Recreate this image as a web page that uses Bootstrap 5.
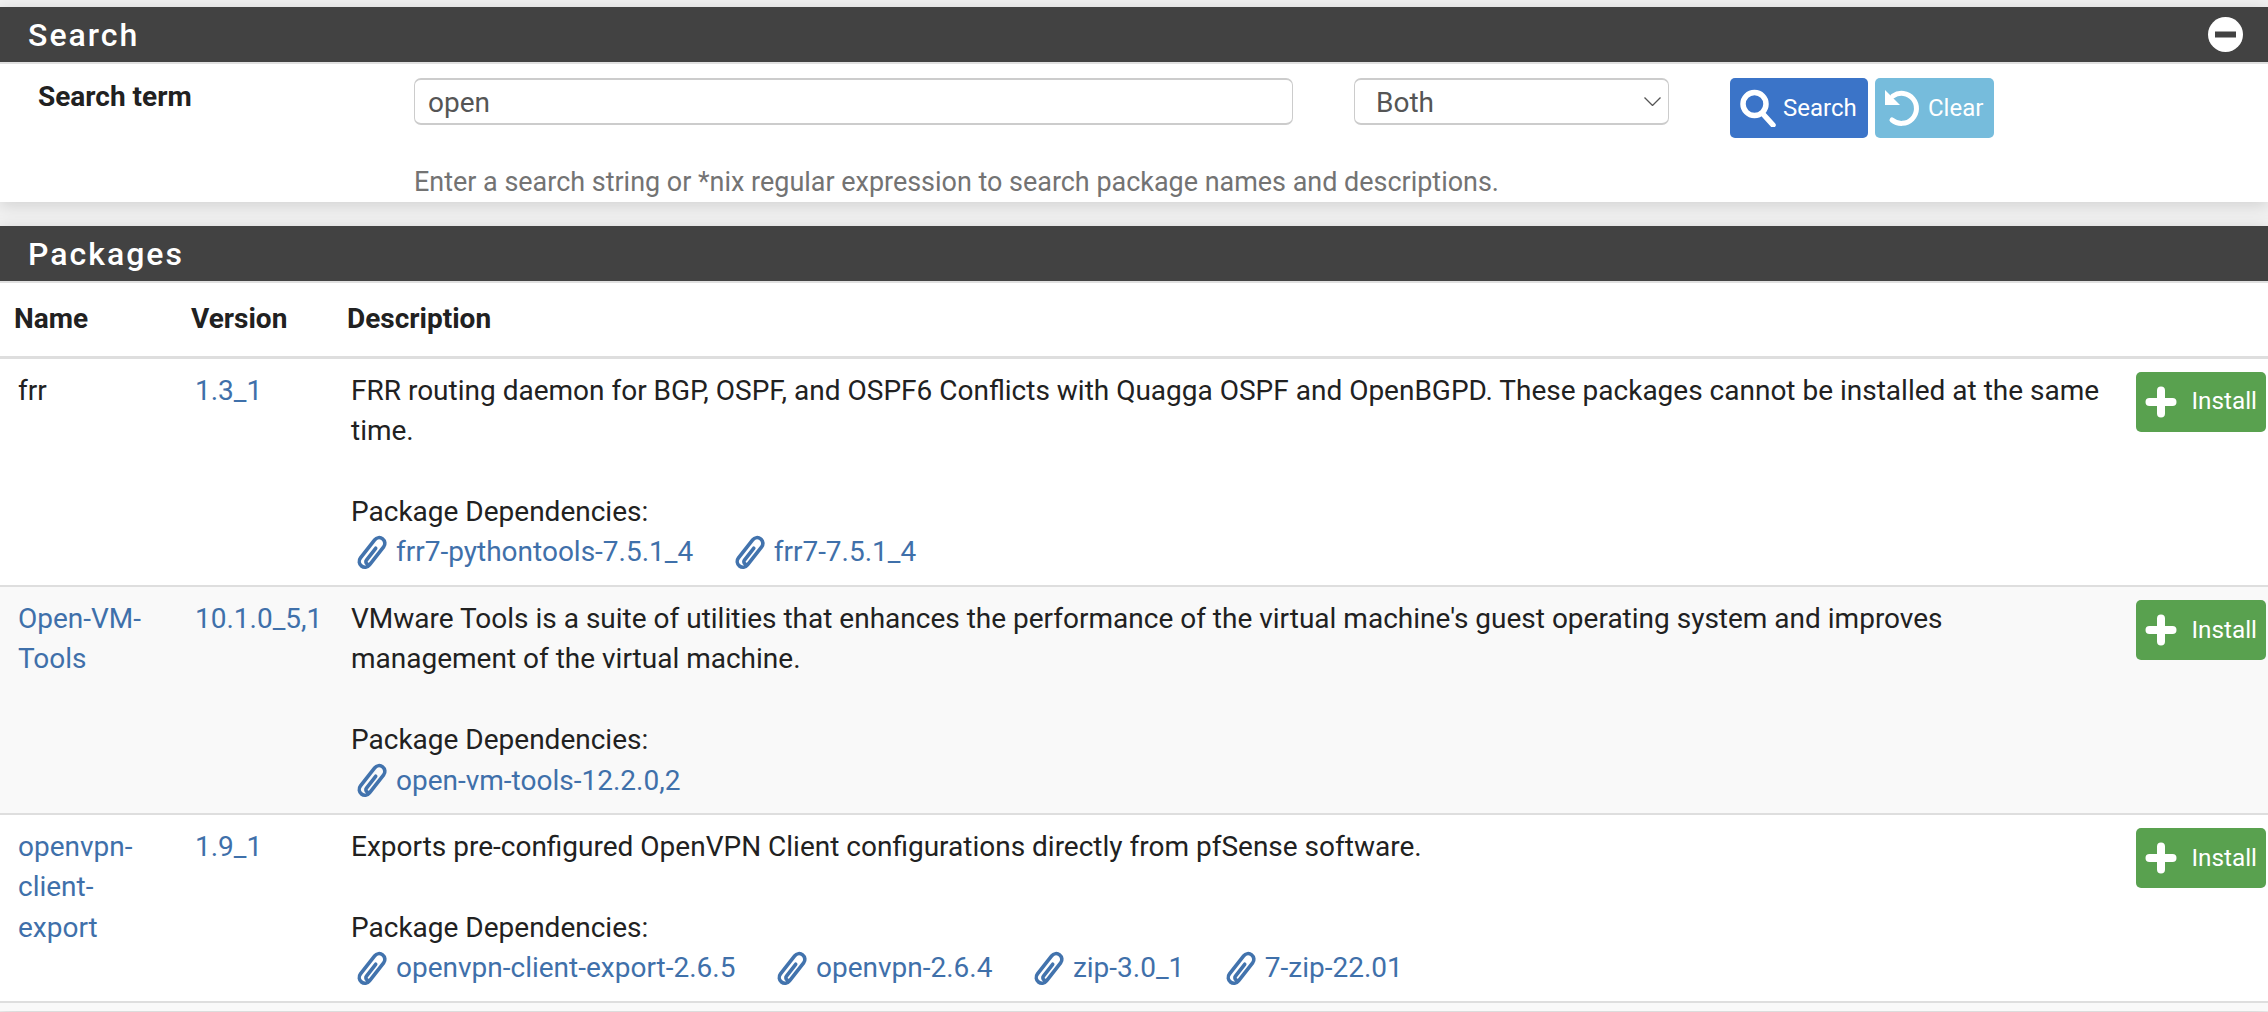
<!DOCTYPE html>
<html lang="en">
<head>
<meta charset="utf-8">
<title>Package Manager</title>
<link href="https://cdn.jsdelivr.net/npm/bootstrap@5.3.0/dist/css/bootstrap.min.css" rel="stylesheet">
<style>
html,body{height:1012px;overflow:hidden}
body{background:#f1f1f1;font-family:Roboto,"Liberation Sans",sans-serif;font-size:28px;color:#212121;padding-top:7px}
.pf-panel{background:#fff;margin-bottom:24px;box-shadow:0 3px 16px rgba(0,0,0,.14)}
.pf-head{background:#424242;color:#fff;height:57px;border-bottom:2px solid #e0e0e0;padding:0 28px;display:flex;align-items:center;justify-content:space-between}
.pf-title{font-size:32px;font-weight:500;letter-spacing:2px;line-height:1;margin:0}
.pf-toggle{margin-right:-3px;display:block}
.pf-form{height:138px;padding:14px 0 0 38px;position:relative}
.pf-label{width:376px;font-weight:700;line-height:1;padding-top:5px;flex:none;font-size:28px}
.pf-input.form-control,.pf-select.form-select{height:47px;font-size:28px;color:#555;border:2px solid #ccc;border-width:2px 1.5px;border-radius:7px;padding:2px 13px 0;line-height:1;box-shadow:none}
.pf-input.form-control{width:879px;flex:none}
.pf-select.form-select{width:315px;flex:none;margin-left:61px;padding-left:21px;background-image:url("data:image/svg+xml,%3csvg xmlns='http://www.w3.org/2000/svg' viewBox='0 0 17 9'%3e%3cpath fill='none' stroke='%23555' stroke-width='1.3' d='M.5.5l8 8 8-8'/%3e%3c/svg%3e");background-size:17px 9px;background-position:right 7px center}
.pf-btn.btn{height:60px;font-size:24px;border-radius:5px;padding:0 9px;color:#fff;display:inline-flex;align-items:center;line-height:1;border:0}
.pf-search.btn{background:#3b74c8;margin-left:61px;width:138px;padding-left:10px;gap:7px}
.pf-clear.btn{background:#76bcdc;margin-left:7px;width:119px;gap:8px}
.pf-help{color:#737373;margin:0 0 0 376px;line-height:1;font-size:26.95px;padding-top:30.500px}
.pf-table.table{margin:0;color:#212121;font-size:28px;line-height:40.45px;table-layout:fixed}
.pf-table.table>*>*>*{border-bottom:2px solid #dedede;padding:12px 8px 12px 18px}
.pf-table.table>tbody>tr>td:nth-child(3){padding-right:20px}
.pf-table.table>thead>tr>th{padding:0 0 0 14px;height:74px;border-bottom-width:3px;vertical-align:middle;font-weight:700;font-size:28px}
.pf-table a{color:#3f70aa;text-decoration:none}
.pf-alt>td{--bs-table-bg:#f9f9f9}
.pf-end>td{--bs-table-bg:#f9f9f9;height:9px;padding:0!important;border:0!important}
.pf-table.table>*>*>.pf-act{padding:13px 2px 0 0;text-align:right}
.pf-install.btn{background:#59a14f;width:130px;font-size:24.3px;color:#fff;height:60px;border-radius:5px;border:0;padding:0 9px 0 7px;display:inline-flex;align-items:center;justify-content:space-between;line-height:1}
.pf-deps{display:flex;gap:38.500px;padding-left:3px}
.pf-deps a{display:inline-flex;align-items:center;gap:4px}
</style>
</head>
<body>
<section class="pf-panel">
  <div class="pf-head">
    <h2 class="pf-title">Search</h2>
    <svg class="pf-toggle" width="35" height="35" viewBox="0 0 35 35" aria-hidden="true"><circle cx="17.5" cy="17.5" r="17.5" fill="#fff"/><rect x="7" y="14.5" width="21" height="6" fill="#424242"/></svg>
  </div>
  <form class="pf-form">
    <div class="d-flex align-items-start">
      <label class="pf-label">Search term</label>
      <input class="form-control pf-input" type="text" value="open">
      <select class="form-select pf-select"><option>Both</option></select>
      <button type="button" class="btn pf-btn pf-search"><svg width="36" height="38" viewBox="0 0 36 38" fill="none" stroke="#fff" aria-hidden="true"><circle cx="14.500" cy="15" r="11.500" stroke-width="5.500"/><path d="M23 25l10 11" stroke-width="5.500" stroke-linecap="round"/></svg>Search</button>
      <button type="button" class="btn pf-btn pf-clear"><svg width="36" height="38" viewBox="0 0 36 38" fill="none" aria-hidden="true"><path d="M9 7A15 15 0 1 1 8 31" stroke="#fff" stroke-width="5" stroke-linecap="round"/><path d="M1 1V16H16Z" fill="#fff"/></svg>Clear</button>
    </div>
    <p class="pf-help">Enter a search string or *nix regular expression to search package names and descriptions.</p>
  </form>
</section>
<section class="pf-panel">
  <div class="pf-head"><h2 class="pf-title">Packages</h2></div>
  <table class="table pf-table">
    <colgroup><col style="width:177px"><col style="width:156px"><col><col style="width:142px"></colgroup>
    <thead><tr><th>Name</th><th>Version</th><th>Description</th><th></th></tr></thead>
    <tbody>
      <tr>
        <td>frr</td><td><a href="#">1.3_1</a></td>
        <td>FRR routing daemon for BGP, OSPF, and OSPF6 Conflicts with Quagga OSPF and OpenBGPD. These packages cannot be installed at the same time.<br><br>Package Dependencies:
          <div class="pf-deps">
            <a href="#"><svg width="38" height="38" viewBox="0 0 38 38"><use href="#clip"/></svg>frr7-pythontools-7.5.1_4</a>
            <a href="#"><svg width="38" height="38" viewBox="0 0 38 38"><use href="#clip"/></svg>frr7-7.5.1_4</a>
          </div></td>
        <td class="pf-act"><button type="button" class="btn pf-install"><svg width="36" height="36" viewBox="0 0 36 36"><use href="#plus"/></svg>Install</button></td>
      </tr>
      <tr class="pf-alt">
        <td><a href="#">Open-VM-Tools</a></td><td><a href="#">10.1.0_5,1</a></td>
        <td>VMware Tools is a suite of utilities that enhances the performance of the virtual machine's guest operating system and improves management of the virtual machine.<br><br>Package Dependencies:
          <div class="pf-deps">
            <a href="#"><svg width="38" height="38" viewBox="0 0 38 38"><use href="#clip"/></svg>open-vm-tools-12.2.0,2</a>
          </div></td>
        <td class="pf-act"><button type="button" class="btn pf-install"><svg width="36" height="36" viewBox="0 0 36 36"><use href="#plus"/></svg>Install</button></td>
      </tr>
      <tr>
        <td><a href="#">openvpn-client-export</a></td><td><a href="#">1.9_1</a></td>
        <td>Exports pre-configured OpenVPN Client configurations directly from pfSense software.<br><br>Package Dependencies:
          <div class="pf-deps">
            <a href="#"><svg width="38" height="38" viewBox="0 0 38 38"><use href="#clip"/></svg>openvpn-client-export-2.6.5</a>
            <a href="#"><svg width="38" height="38" viewBox="0 0 38 38"><use href="#clip"/></svg>openvpn-2.6.4</a>
            <a href="#"><svg width="38" height="38" viewBox="0 0 38 38"><use href="#clip"/></svg>zip-3.0_1</a>
            <a href="#"><svg width="38" height="38" viewBox="0 0 38 38"><use href="#clip"/></svg>7-zip-22.01</a>
          </div></td>
        <td class="pf-act"><button type="button" class="btn pf-install"><svg width="36" height="36" viewBox="0 0 36 36"><use href="#plus"/></svg>Install</button></td>
      </tr>
      <tr class="pf-end"><td colspan="4"></td></tr>
    </tbody>
  </table>
</section>
<svg width="0" height="0" class="d-block" aria-hidden="true">
  <defs>
    <g id="clip" fill="none" stroke="#4273ad" stroke-width="3.600" stroke-linecap="round" stroke-linejoin="round" transform="rotate(38 18 19)">
      <path d="M18 13V28a2.700 2.700 0 0 0 5.400 0V7a5.700 5.700 0 0 0-11.400 0V30a5.700 5.700 0 0 0 11.400 0V28"/>
    </g>
    <path id="plus" d="M18 6.500V29.500M6.500 18H29.500" stroke="#fff" stroke-width="8" stroke-linecap="round" fill="none"/>
  </defs>
</svg>
<script src="https://cdn.jsdelivr.net/npm/bootstrap@5.3.0/dist/js/bootstrap.bundle.min.js"></script>
</body>
</html>
